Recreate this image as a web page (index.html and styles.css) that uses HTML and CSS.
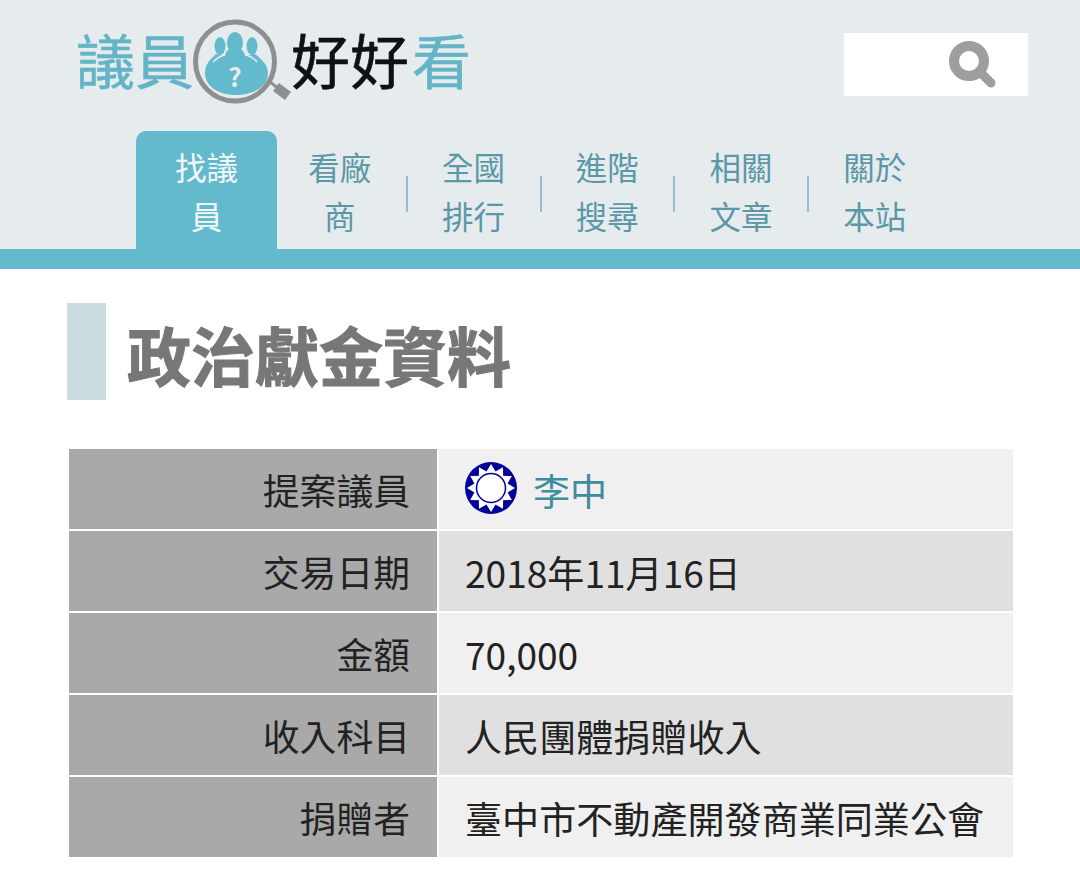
FILE: index.html
```html
<!DOCTYPE html>
<html lang="zh-Hant">
<head>
    <meta charset="UTF-8">
    <meta name="viewport" content="width=device-width, initial-scale=1.0">
    <title>政治獻金資料</title>
    <link rel="stylesheet" href="styles.css">
</head>
<body>
    <header class="header">
        <div class="top">
            <a href="#" class="logo">
                <span class="logo-teal">議員</span>
                <svg class="logo-icon" width="99" height="90" viewBox="0 0 99 90">
                    <path d="M77 63 L88 72" stroke="#8f8f8f" stroke-width="3"/>
                    <path d="M84 69 L96 78" stroke="#8f8f8f" stroke-width="10"/>
                    <circle cx="43" cy="43.5" r="39.5" fill="#e6ebee" stroke="#8f8f8f" stroke-width="5"/>
                    <ellipse cx="28" cy="28" rx="5.5" ry="9" fill="#63bacd"/>
                    <ellipse cx="60" cy="28" rx="5.5" ry="9" fill="#63bacd"/>
                    <ellipse cx="43" cy="25" rx="8" ry="11" fill="#63bacd"/>
                    <path d="M13 55 C13 45 20 40 24 36 L33 38 C33 35 35 33 37 31 L49 31 C51 33 53 35 53 38 L63 36 C68 40 76 46 76 55 C76 68 62 77 44 77 C26 77 13 68 13 55 Z" fill="#63bacd"/>
                    <path d="M21 44 Q27 38 33 37 M65 44 Q60 38 53 37" stroke="#e6ebee" stroke-width="1.5" fill="none"/>
                    <text x="43" y="69" class="logo-question">?</text>
                </svg>
                <span class="logo-black">好好</span>
                <span class="logo-teal logo-last">看</span>
            </a>
            <div class="search">
                <svg width="52" height="52" viewBox="0 0 52 52">
                    <circle cx="20" cy="20" r="15" fill="none" stroke="#9e9e9e" stroke-width="10"/>
                    <path d="M31 31 L42 42" stroke="#9e9e9e" stroke-width="9" stroke-linecap="round"/>
                </svg>
            </div>
        </div>
        <nav class="nav">
            <a href="#" class="nav-item active">找議員</a>
            <a href="#" class="nav-item sep">看廠商</a>
            <a href="#" class="nav-item sep">全國排行</a>
            <a href="#" class="nav-item sep">進階搜尋</a>
            <a href="#" class="nav-item sep">相關文章</a>
            <a href="#" class="nav-item">關於本站</a>
        </nav>
    </header>
    <div class="nav-line"></div>

    <main class="main">
        <h1 class="title"><span class="title-bar"></span><span class="title-text">政治獻金資料</span></h1>
        <table class="info">
            <tr>
                <th>提案議員</th>
                <td>
                    <div class="person">
                        <svg class="emblem" width="54" height="54" viewBox="-27 -27 54 54">
                            <circle r="26" fill="#00009a"/>
                            <g fill="#fff">
                                <polygon id="ray" points="-6,-14 6,-14 0,-24"/>
                                <use href="#ray" transform="rotate(30)"/>
                                <use href="#ray" transform="rotate(60)"/>
                                <use href="#ray" transform="rotate(90)"/>
                                <use href="#ray" transform="rotate(120)"/>
                                <use href="#ray" transform="rotate(150)"/>
                                <use href="#ray" transform="rotate(180)"/>
                                <use href="#ray" transform="rotate(210)"/>
                                <use href="#ray" transform="rotate(240)"/>
                                <use href="#ray" transform="rotate(270)"/>
                                <use href="#ray" transform="rotate(300)"/>
                                <use href="#ray" transform="rotate(330)"/>
                            </g>
                            <circle r="14.5" fill="#fff" stroke="#00009a" stroke-width="1.5"/>
                        </svg>
                        <a href="#" class="person-link">李中</a>
                    </div>
                </td>
            </tr>
            <tr>
                <th>交易日期</th>
                <td>2018年11月16日</td>
            </tr>
            <tr>
                <th>金額</th>
                <td>70,000</td>
            </tr>
            <tr>
                <th>收入科目</th>
                <td>人民團體捐贈收入</td>
            </tr>
            <tr>
                <th>捐贈者</th>
                <td>臺中市不動產開發商業同業公會</td>
            </tr>
        </table>
    </main>
</body>
</html>
```

FILE: styles.css
```css
body {
    margin: 0;
    background-color: #fff;
    font-family: "Noto Sans CJK TC", "Noto Sans", sans-serif;
    overflow: hidden;
}

a {
    text-decoration: none;
}

.header {
    background-color: #e6ebee;
    height: 249px;
}

.top {
    display: flex;
    justify-content: space-between;
    height: 131px;
    padding: 16px 52px 0 76px;
    box-sizing: border-box;
}

.logo {
    display: flex;
    align-items: center;
    height: 85px;
    font-size: 59px;
    line-height: 85px;
}

.logo-teal {
    color: #63b4c6;
    -webkit-text-stroke: 0.5px #63b4c6;
}

.logo-last {
    margin-left: 3px;
}

.logo-black {
    color: #111;
    -webkit-text-stroke: 0.6px #111;
}

.logo-icon {
    flex: none;
    align-self: flex-start;
    margin: 2px 0 0 -2px;
}

.logo-question {
    fill: #e6ebee;
    font-size: 26px;
    font-weight: bold;
    text-anchor: middle;
}

.search {
    display: flex;
    justify-content: flex-end;
    width: 184px;
    height: 63px;
    margin-top: 17px;
    padding: 8px 27px 0 0;
    box-sizing: border-box;
    background-color: #fff;
}

.nav {
    display: flex;
    padding-left: 136px;
}

.nav-item {
    position: relative;
    width: 133.75px;
    height: 118px;
    padding: 11px 34px 0;
    box-sizing: border-box;
    color: #5b98a7;
    font-size: 31.5px;
    line-height: 49px;
    text-align: center;
}

.nav-item.active {
    width: 141px;
    margin-right: -4px;
    padding: 11px 38px 0;
    border-radius: 10px 10px 0 0;
    background-color: #63bacd;
    color: #f2f8fa;
}

.nav-item.sep::after {
    content: "";
    position: absolute;
    top: 45px;
    right: -1px;
    width: 2px;
    height: 36px;
    background-color: #93c0cb;
}

.nav-line {
    height: 20px;
    background-color: #63bacd;
}

.title {
    display: flex;
    gap: 21px;
    margin: 34px 0 0 67px;
    height: 97px;
    color: #777;
    font-size: 64px;
    line-height: 100px;
    -webkit-text-stroke: 1px #777;
}

.title-bar {
    width: 39px;
    background-color: #cbdde1;
}

.info {
    width: 948px;
    margin: 47px 0 0 67px;
    border-collapse: separate;
    border-spacing: 2px;
    font-size: 36.8px;
    color: #222;
}

.info th,
.info td {
    height: 80px;
    box-sizing: border-box;
    font-weight: normal;
}

.info th {
    width: 368px;
    padding: 0 27px;
    background-color: #a9a9a9;
    text-align: right;
}

.info td {
    padding: 2px 26px 0;
    font-size: 37.1px;
}

.info tr:nth-child(odd) td {
    background-color: #f0f0f0;
}

.info tr:nth-child(even) td {
    background-color: #e0e0e0;
}

.person {
    display: flex;
    align-items: center;
    gap: 15px;
    margin-left: -1px;
}

.emblem {
    margin-top: -5px;
}

.person-link {
    color: #3f8d9c;
}
```
